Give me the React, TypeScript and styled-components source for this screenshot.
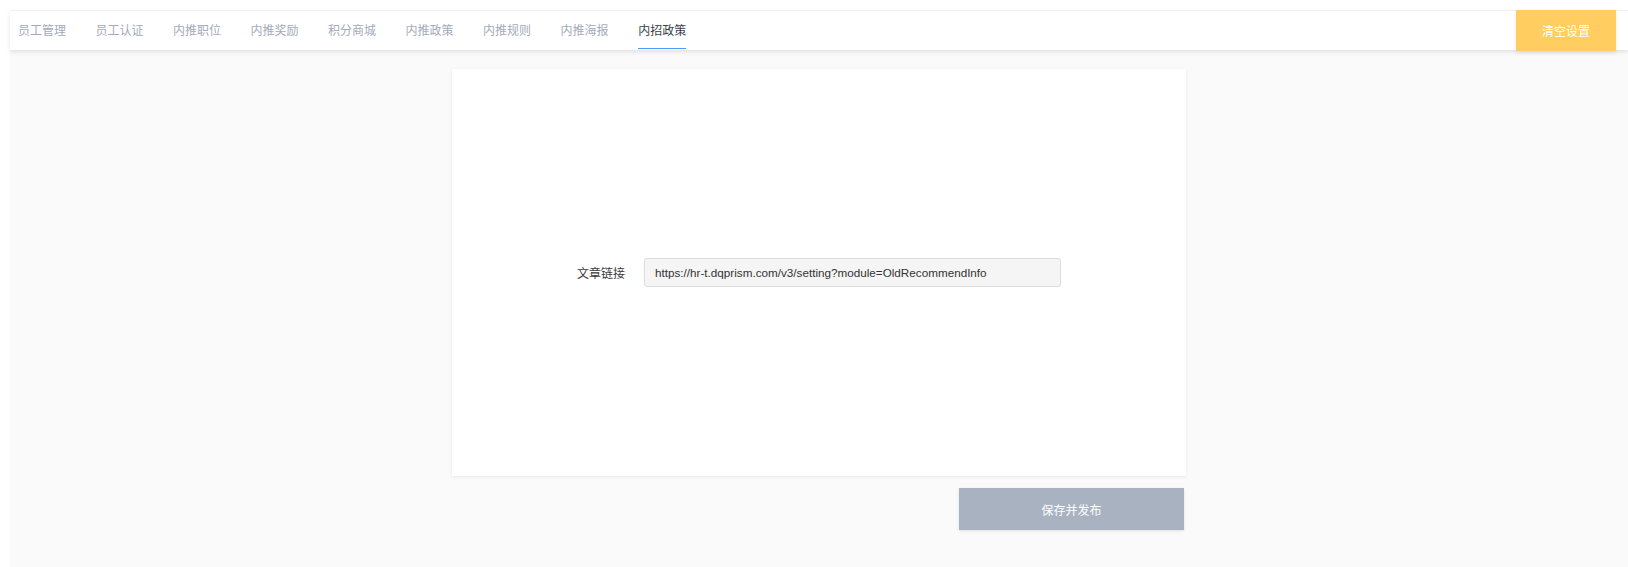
import React from "react";
import styled, { createGlobalStyle } from "styled-components";

const GlobalStyle = createGlobalStyle`
  html, body {
    margin: 0;
    padding: 0;
    background: #ffffff;
  }
  body {
    padding: 10px 0 0 10px;
    font-family: "Liberation Sans", Arial, "Noto Sans CJK SC", sans-serif;
    font-size: 12px;
  }
  * { box-sizing: border-box; }
`;

const Page = styled.div`
  min-height: 557px;
  background: #fafafa;
  display: flex;
  flex-direction: column;
`;

const TopBar = styled.div`
  position: relative;
  z-index: 1;
  height: 40px;
  background: #ffffff;
  border-top: 1px solid #f2f2f2;
  box-shadow: 0 2px 4px rgba(0, 0, 0, 0.1);
  display: flex;
  align-items: stretch;
  justify-content: space-between;
  padding-left: 8px;
`;

const Tabs = styled.nav`
  display: flex;
  align-items: stretch;
  gap: 29.5px;
`;

const Tab = styled.div<{ $active?: boolean }>`
  position: relative;
  display: flex;
  align-items: center;
  padding-bottom: 3px;
  font-family: "Noto Sans CJK SC", sans-serif;
  font-size: 12px;
  color: ${(p) => (p.$active ? "#3a3f4a" : "#a3abbb")};
  cursor: pointer;

  &::after {
    content: "";
    display: ${(p) => (p.$active ? "block" : "none")};
    position: absolute;
    left: 0;
    right: 0;
    bottom: 1px;
    height: 1px;
    background: #4a9cf5;
  }
`;

const ClearButton = styled.button`
  align-self: flex-start;
  margin: -1px 12px 0 0;
  width: 100px;
  height: 41px;
  border: none;
  background: #ffcd60;
  color: #ffffff;
  font-family: "Noto Sans CJK SC", sans-serif;
  font-size: 12px;
  box-shadow: 0 2px 4px rgba(0, 0, 0, 0.08);
  cursor: pointer;
`;

const Main = styled.main`
  display: flex;
  flex-direction: column;
  align-items: center;
  padding-top: 19px;
`;

const Card = styled.section`
  width: 734px;
  height: 407px;
  background: #ffffff;
  box-shadow: 0 1px 3px rgba(0, 0, 0, 0.08);
  display: flex;
  align-items: center;
  justify-content: center;
`;

const FieldRow = styled.div`
  display: flex;
  align-items: center;
  gap: 19px;
`;

const Label = styled.label`
  font-family: "Noto Sans CJK SC", sans-serif;
  font-size: 12px;
  color: #3a3a3a;
`;

const LinkInput = styled.input`
  width: 417px;
  height: 29px;
  padding: 0 10px;
  border: 1px solid #dcdcdc;
  border-radius: 3px;
  background: #f5f5f5;
  color: #333333;
  font-family: "Liberation Sans", Arial, sans-serif;
  font-size: 11.7px;
  outline: none;
`;

const Actions = styled.div`
  width: 734px;
  display: flex;
  justify-content: flex-end;
  padding-right: 2px;
  margin-top: 12px;
`;

const PublishButton = styled.button`
  width: 225px;
  height: 42px;
  border: none;
  background: #a9b2c1;
  color: #ffffff;
  font-family: "Noto Sans CJK SC", sans-serif;
  font-size: 12px;
  box-shadow: 0 1px 3px rgba(0, 0, 0, 0.1);
  cursor: pointer;
`;

const tabs = [
  "员工管理",
  "员工认证",
  "内推职位",
  "内推奖励",
  "积分商城",
  "内推政策",
  "内推规则",
  "内推海报",
  "内招政策",
];

export default function App() {
  return (
    <>
      <GlobalStyle />
      <Page>
        <TopBar>
          <Tabs>
            {tabs.map((t) => (
              <Tab key={t} $active={t === "内招政策"}>
                {t}
              </Tab>
            ))}
          </Tabs>
          <ClearButton>清空设置</ClearButton>
        </TopBar>
        <Main>
          <Card>
            <FieldRow>
              <Label>文章链接</Label>
              <LinkInput
                readOnly
                value="https://hr-t.dqprism.com/v3/setting?module=OldRecommendInfo"
              />
            </FieldRow>
          </Card>
          <Actions>
            <PublishButton>保存并发布</PublishButton>
          </Actions>
        </Main>
      </Page>
    </>
  );
}
